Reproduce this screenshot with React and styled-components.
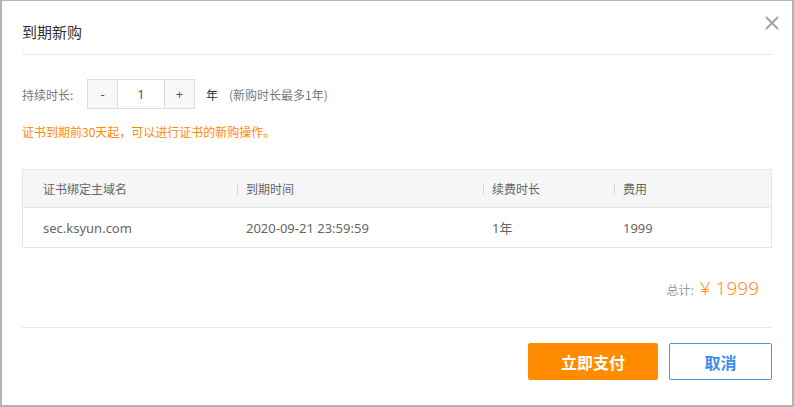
import React from "react";
import styled, { createGlobalStyle } from "styled-components";

const Global = createGlobalStyle`
  html, body { margin: 0; padding: 0; }
  body {
    background: #b4b4b4;
    font-family: "Noto Sans", "Noto Sans CJK SC", sans-serif;
    padding: 1px 2px 2px 2px;
    width: 794px;
    height: 407px;
    box-sizing: border-box;
    overflow: hidden;
  }
`;

const Modal = styled.div`
  position: relative;
  width: 790px;
  height: 404px;
  background: #fff;
  box-sizing: border-box;
  padding: 0 20px;
  display: flex;
  flex-direction: column;
`;

const Header = styled.div`
  height: 54px;
  padding-top: 7px;
  box-sizing: border-box;
  display: flex;
  align-items: center;
  border-bottom: 1px solid #e8e8e8;
`;

const Title = styled.h2`
  margin: 0;
  font-size: 15px;
  font-weight: normal;
  color: #333;
  font-family: "Noto Sans CJK SC", sans-serif;
`;

const Close = styled.button`
  position: absolute;
  top: 14px;
  right: 12px;
  width: 16px;
  height: 16px;
  padding: 0;
  border: none;
  background: transparent;
  display: flex;
  align-items: center;
  justify-content: center;
  cursor: pointer;
`;

const Row = styled.div`
  margin-top: 24px;
  height: 30px;
  display: flex;
  align-items: center;
  font-family: "Noto Sans CJK SC", sans-serif;
`;

const Label = styled.span`
  width: 65px;
  font-size: 12px;
  color: #777;
`;

const Stepper = styled.div`
  display: flex;
  height: 30px;
  border: 1px solid #dcdcdc;
  box-sizing: border-box;
`;

const StepBtn = styled.button`
  width: 30px;
  height: 100%;
  padding: 0;
  border: none;
  border-left: ${(p) => (p.$right ? "1px solid #dcdcdc" : "none")};
  border-right: ${(p) => (p.$right ? "none" : "1px solid #dcdcdc")};
  background: #f8f8f8;
  color: #555;
  font-size: 13px;
  font-family: "Noto Sans", sans-serif;
`;

const StepValue = styled.div`
  width: 46px;
  display: flex;
  align-items: center;
  justify-content: center;
  font-size: 13px;
  color: #555;
  font-family: "Noto Sans", sans-serif;
`;

const Unit = styled.span`
  margin-left: 11px;
  font-size: 12px;
  color: #333;
`;

const Hint = styled.span`
  margin-left: 11px;
  font-size: 12px;
  color: #777;
`;

const Notice = styled.div`
  margin-top: 14px;
  line-height: 18px;
  font-size: 12px;
  color: #ff8a00;
  font-family: "Noto Sans CJK SC", sans-serif;
`;

const Table = styled.div`
  margin-top: 28px;
  border: 1px solid #e6e6e6;
  display: grid;
  grid-template-columns: 214px 246px 131px 1fr;
  font-family: "Noto Sans CJK SC", sans-serif;
`;

const HeadCell = styled.div`
  position: relative;
  height: 37px;
  background: #f6f6f6;
  border-bottom: 1px solid #e6e6e6;
  display: flex;
  align-items: center;
  padding-left: ${(p) => (p.$first ? "20px" : "9px")};
  font-size: 12px;
  color: #666;
  &::before {
    content: "";
    display: ${(p) => (p.$first ? "none" : "block")};
    position: absolute;
    left: 0;
    top: 13px;
    width: 1px;
    height: 12px;
    background: #d6d6d6;
  }
`;

const Cell = styled.div`
  height: 39px;
  display: flex;
  align-items: center;
  padding-left: ${(p) => (p.$first ? "20px" : "9px")};
  font-size: 13px;
  color: #666;
  font-family: "Noto Sans", "Noto Sans CJK SC", sans-serif;
`;

const Total = styled.div`
  margin-top: 26px;
  height: 28px;
  display: flex;
  align-items: center;
  justify-content: flex-end;
  padding-right: 13px;
  font-family: "Noto Sans CJK SC", sans-serif;
`;

const TotalLabel = styled.span`
  font-size: 12px;
  color: #999;
  margin-right: 6px;
  margin-top: 3px;
`;

const Amount = styled.span`
  font-size: 19px;
  color: #ff8f2a;
  font-family: "Noto Sans", "Noto Sans CJK SC", sans-serif;
  font-weight: 300;
`;

const Footer = styled.div`
  margin-top: 25px;
  border-top: 1px solid #e8e8e8;
  padding-top: 15px;
  display: flex;
  justify-content: flex-end;
  gap: 11px;
`;

const Button = styled.button`
  height: 37px;
  width: ${(p) => (p.$primary ? "130px" : "103px")};
  border-radius: 2px;
  border: 1px solid ${(p) => (p.$primary ? "#ff8c00" : "#3a9cf0")};
  background: ${(p) => (p.$primary ? "#ff8c00" : "#fff")};
  color: ${(p) => (p.$primary ? "#fff" : "#3a8ee6")};
  font-size: 16px;
  font-weight: bold;
  font-family: "Noto Sans CJK SC", sans-serif;
  padding: 0;
`;

const columns = ["证书绑定主域名", "到期时间", "续费时长", "费用"];
const row = ["sec.ksyun.com", "2020-09-21 23:59:59", "1年", "1999"];

export default function App() {
  return (
    <>
      <Global />
      <Modal>
        <Header>
          <Title>到期新购</Title>
        </Header>
        <Close aria-label="close">
          <svg width="14" height="14" viewBox="0 0 14 14">
            <path d="M1 1L13 13M13 1L1 13" stroke="#9ea3ad" strokeWidth="2" fill="none" />
          </svg>
        </Close>
        <Row>
          <Label>持续时长:</Label>
          <Stepper>
            <StepBtn>-</StepBtn>
            <StepValue>1</StepValue>
            <StepBtn $right>+</StepBtn>
          </Stepper>
          <Unit>年</Unit>
          <Hint>(新购时长最多1年)</Hint>
        </Row>
        <Notice>证书到期前30天起，可以进行证书的新购操作。</Notice>
        <Table>
          {columns.map((c, i) => (
            <HeadCell key={c} $first={i === 0}>{c}</HeadCell>
          ))}
          {row.map((c, i) => (
            <Cell key={c} $first={i === 0}>{c}</Cell>
          ))}
        </Table>
        <Total>
          <TotalLabel>总计:</TotalLabel>
          <Amount>¥ 1999</Amount>
        </Total>
        <Footer>
          <Button $primary>立即支付</Button>
          <Button>取消</Button>
        </Footer>
      </Modal>
    </>
  );
}
